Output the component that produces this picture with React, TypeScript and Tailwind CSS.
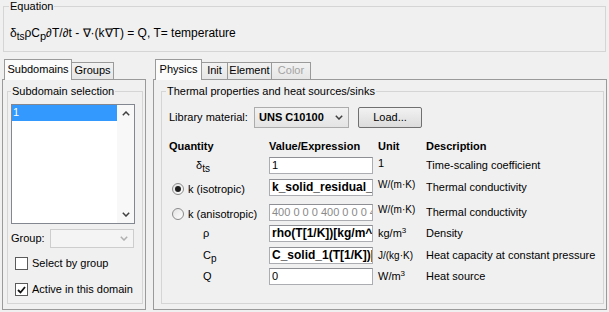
import React from 'react';

function Chevron({ up = false, color = '#404040' }: { up?: boolean; color?: string }) {
  return (
    <svg width="8" height="5" viewBox="0 0 8 5" className={up ? 'rotate-180' : ''}>
      <path d="M0.8 0.8 L4 4 L7.2 0.8" fill="none" stroke={color} strokeWidth="1.5" />
    </svg>
  );
}

function Tab({ label, active, disabled, w, first }: { label: string; active?: boolean; disabled?: boolean; w: string; first?: boolean }) {
  if (active) {
    return (
      <div className={`relative z-10 -mb-px flex h-[21px] ${w} items-start justify-center border border-b-0 border-[#9a9a9a] bg-[#fbfbfb] pt-[3px]`}>
        {label}
      </div>
    );
  }
  return (
    <div
      className={`flex h-[17px] ${w} items-start justify-center border border-b-0 ${first ? '' : 'border-l-0'} border-[#9a9a9a] bg-gradient-to-b from-[#f2f2f2] to-[#e6e6e6] pt-[1px] ${disabled ? 'text-[#a3a3a3]' : ''}`}
    >
      {label}
    </div>
  );
}

function Radio({ checked }: { checked?: boolean }) {
  return (
    <span className="flex h-[12px] w-[12px] items-center justify-center rounded-full border border-[#8a8a8a] bg-gradient-to-br from-[#e2e2e2] to-white">
      {checked && <span className="h-[6px] w-[6px] rounded-full bg-[#1e1e1e]" />}
    </span>
  );
}

function CheckBox({ checked }: { checked?: boolean }) {
  return (
    <span className="flex h-[13px] w-[13px] items-center justify-center border border-[#5a5a5a] bg-white">
      {checked && (
        <svg width="9" height="8" viewBox="0 0 9 8">
          <path d="M1 4 L3.5 6.5 L8 1" fill="none" stroke="#111" strokeWidth="1.8" />
        </svg>
      )}
    </span>
  );
}

function Field({ children, bold, disabled }: { children: React.ReactNode; bold?: boolean; disabled?: boolean }) {
  return (
    <div
      className={`flex h-[17px] w-[104px] items-center overflow-hidden whitespace-nowrap border border-[#abadb3] border-t-[#8e8f94] bg-white pl-[2px] ${
        bold ? 'text-[12px] font-bold' : ''
      } ${disabled ? 'text-[#8a8a8a]' : ''}`}
    >
      {children}
    </div>
  );
}

function Row({ q, value, unit, desc, mt, unitShift = '' }: { q: React.ReactNode; value: React.ReactNode; unit: React.ReactNode; desc: string; mt: string; unitShift?: string }) {
  return (
    <div className={`flex h-[17px] items-center ${mt}`}>
      <div className="flex w-[100px] items-center">{q}</div>
      <div className="w-[109px]">{value}</div>
      <div className={`w-[47px] whitespace-nowrap ${unitShift}`}>{unit}</div>
      <div className="ml-[1px] whitespace-nowrap">{desc}</div>
    </div>
  );
}

export default function App() {
  return (
    <div className="h-[312px] w-[609px] overflow-hidden bg-[#f0f0f0] font-['Liberation_Sans',Arial,sans-serif] text-[11px] leading-[13px] text-black">
      {/* Equation */}
      <fieldset className="mx-[3px] h-[52px] border border-[#d5d5d5]">
        <legend className="ml-[5px] px-[1px]">Equation</legend>
        <div className="mt-[14px] pl-[6px] text-[12px]">
          δ<sub className="text-[10px]">ts</sub>ρC<sub className="text-[11px]">p</sub>∂T/∂t - ∇·(k∇T) = Q, T= temperature
        </div>
      </fieldset>

      <div className="mt-[7px] flex">
        {/* Left tab control */}
        <div className="ml-[2px] w-[144px]">
          <div className="flex h-[20px] items-end pl-[2px]">
            <Tab label="Subdomains" active w="w-[68px]" />
            <Tab label="Groups" w="w-[42px]" />
          </div>
          <div className="h-[231px] border border-[#9a9a9a] pl-[4px] pr-[2px] pt-[5px]">
            <fieldset className="h-[219px] border border-[#d5d5d5]">
              <legend className="ml-[3px] px-[1px]">Subdomain selection</legend>
              <div className="pl-[3px]">
                <div className="mt-[6px] flex h-[120px] w-[124px] border border-[#828790] bg-white">
                  <div className="flex-1">
                    <div className="h-[16px] bg-[#3399ff] pl-[1px] pt-[1px] text-white">1</div>
                  </div>
                  <div className="flex w-[17px] flex-col justify-between bg-[#f8f8f8]">
                    <div className="flex h-[17px] items-center justify-center">
                      <Chevron up />
                    </div>
                    <div className="flex h-[17px] items-center justify-center">
                      <Chevron />
                    </div>
                  </div>
                </div>
                <div className="mt-[5px] flex items-center">
                  <span className="w-[39px]">Group:</span>
                  <div className="flex h-[19px] w-[84px] items-center justify-end border border-[#cdcdcd] bg-[#f4f4f4] pr-[5px]">
                    <Chevron color="#b0b0b0" />
                  </div>
                </div>
                <div className="ml-[4px] mt-[9px] flex items-center gap-[4px]">
                  <CheckBox />
                  <span>Select by group</span>
                </div>
                <div className="ml-[4px] mt-[13px] flex items-center gap-[4px]">
                  <CheckBox checked />
                  <span>Active in this domain</span>
                </div>
              </div>
            </fieldset>
          </div>
        </div>

        {/* Right tab control */}
        <div className="ml-[7px] w-[454px]">
          <div className="flex h-[20px] items-end pl-[2px]">
            <Tab label="Physics" active w="w-[47px]" />
            <Tab label="Init" w="w-[26px]" />
            <Tab label="Element" w="w-[44px]" />
            <Tab label="Color" disabled w="w-[39px]" />
          </div>
          <div className="h-[231px] border border-[#9a9a9a] pl-[7px] pr-[2px] pt-[5px]">
            <fieldset className="h-[219px] border border-[#d5d5d5]">
              <legend className="ml-[4px] px-[1px]">Thermal properties and heat sources/sinks</legend>
              <div className="pl-[7px]">
                <div className="mt-[9px] flex h-[21px] items-center">
                  <span className="w-[85px]">Library material:</span>
                  <div className="flex h-[21px] w-[95px] items-center justify-between border border-[#acacac] bg-gradient-to-b from-[#f2f2f2] to-[#e4e4e4] pl-[4px] pr-[5px] font-bold">
                    <span>UNS C10100</span>
                    <Chevron />
                  </div>
                  <div className="ml-[9px] flex h-[21px] w-[64px] items-center justify-center rounded-[2px] border border-[#707070] bg-gradient-to-b from-[#f2f2f2] to-[#dcdcdc]">
                    Load...
                  </div>
                </div>

                <div className="mt-[12px] flex h-[13px] font-bold">
                  <div className="w-[100px]">Quantity</div>
                  <div className="w-[109px]">Value/Expression</div>
                  <div className="w-[48px]">Unit</div>
                  <div>Description</div>
                </div>

                <Row
                  mt="mt-[4px]"
                  q={
                    <span className="pl-[27px]">
                      δ<sub className="text-[10px]">ts</sub>
                    </span>
                  }
                  value={<Field>1</Field>}
                  unit="1"
                  unitShift="-mt-[4px]"
                  desc="Time-scaling coefficient"
                />
                <Row
                  mt="mt-[5px]"
                  q={
                    <span className="flex items-center gap-[4px] pl-[3px] pt-[3px]">
                      <Radio checked />
                      k (isotropic)
                    </span>
                  }
                  value={<Field bold>k_solid_residual_it</Field>}
                  unit={<span className="text-[10px]">W/(m·K)</span>}
                  unitShift="-mt-[6px]"
                  desc="Thermal conductivity"
                />
                <Row
                  mt="mt-[8px]"
                  q={
                    <span className="flex items-center gap-[4px] pl-[3px] pt-[3px]">
                      <Radio />
                      k (anisotropic)
                    </span>
                  }
                  value={<Field disabled>400 0 0 0 400 0 0 0 400</Field>}
                  unit={<span className="text-[10px]">W/(m·K)</span>}
                  unitShift="-mt-[6px]"
                  desc="Thermal conductivity"
                />
                <Row
                  mt="mt-[4px]"
                  q={<span className="pl-[34px]">ρ</span>}
                  value={<Field bold>rho(T[1/K])[kg/m^3]</Field>}
                  unit={
                    <span>
                      kg/m<sup className="text-[8px]">3</sup>
                    </span>
                  }
                  desc="Density"
                />
                <Row
                  mt="mt-[5px]"
                  q={
                    <span className="pl-[34px]">
                      C<sub className="text-[10px]">p</sub>
                    </span>
                  }
                  value={<Field bold>C_solid_1(T[1/K])[J/(kg*K)]</Field>}
                  unit={<span className="text-[10px]">J/(kg·K)</span>}
                  desc="Heat capacity at constant pressure"
                />
                <Row
                  mt="mt-[4px]"
                  q={<span className="pl-[34px]">Q</span>}
                  value={<Field>0</Field>}
                  unit={
                    <span>
                      W/m<sup className="text-[8px]">3</sup>
                    </span>
                  }
                  desc="Heat source"
                />
              </div>
            </fieldset>
          </div>
        </div>
      </div>
    </div>
  );
}
